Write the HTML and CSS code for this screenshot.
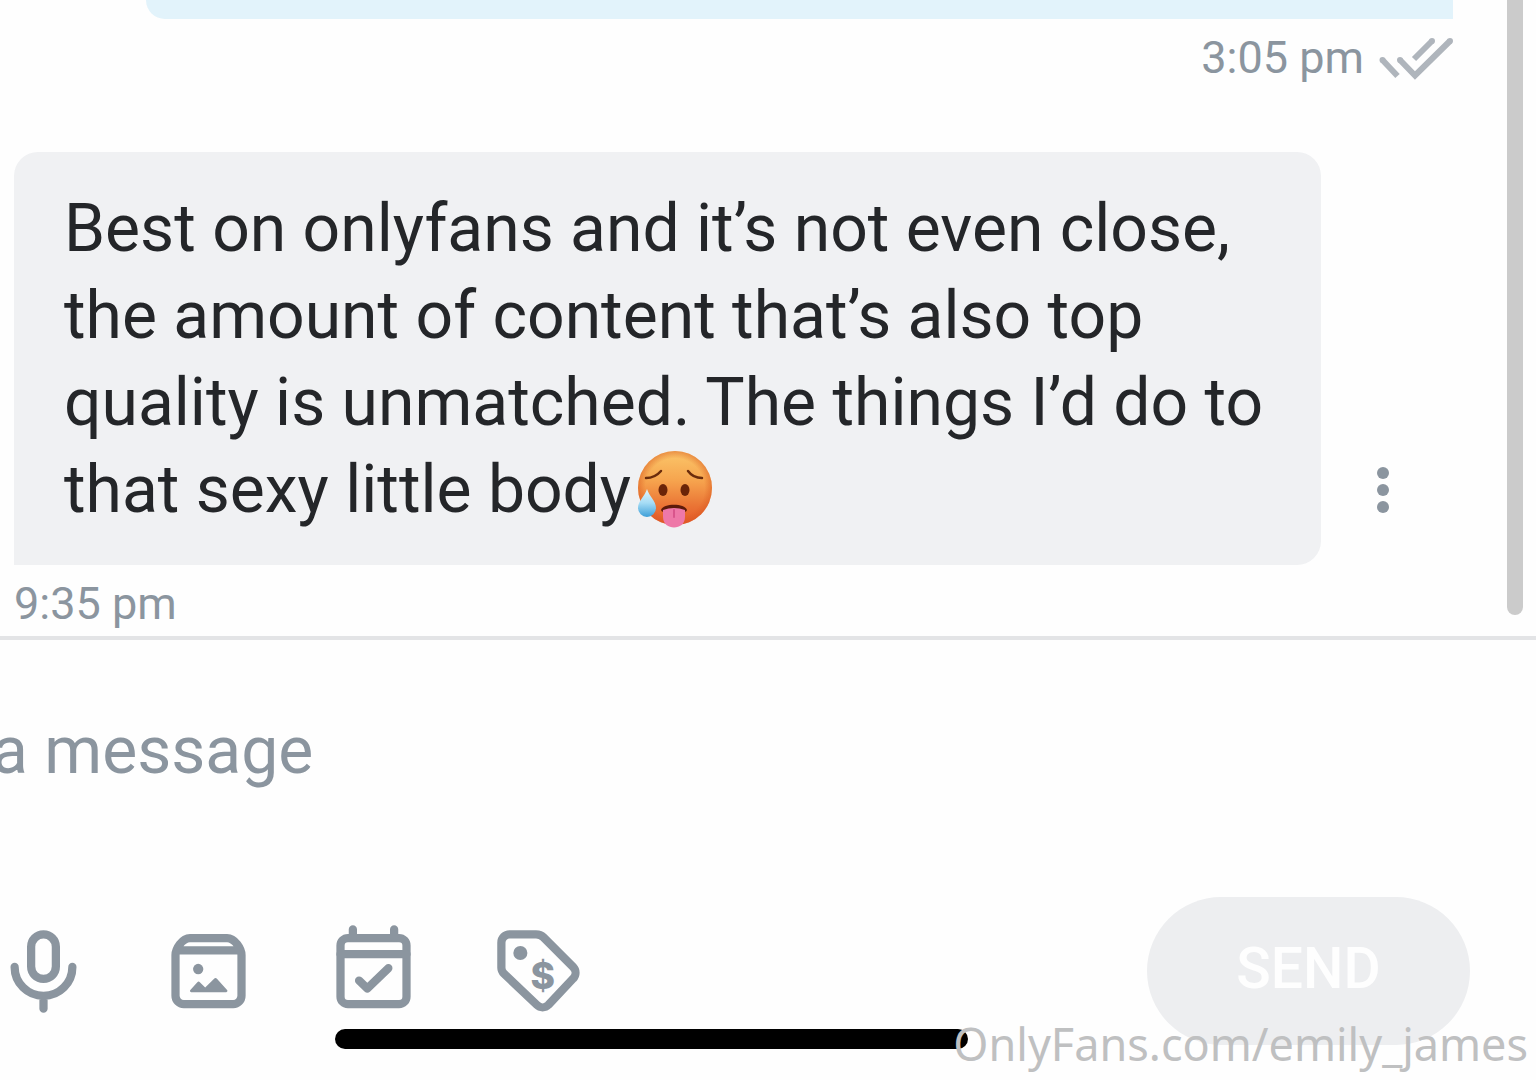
FILE: index.html
```html
<!DOCTYPE html>
<html lang="en">
<head>
    <meta charset="UTF-8">
    <meta name="viewport" content="width=device-width, initial-scale=1.0">
    <title>Messages</title>
    <link rel="stylesheet" href="styles.css">
</head>
<body>
    <main class="thread">
        <div class="message sent">
            <div class="bubble"></div>
            <div class="meta">
                <time>3:05 pm</time>
                <svg class="ticks" viewBox="0 0 75 44" role="img" aria-label="Read">
                    <path d="M4.500 24L19.500 40" />
                    <path d="M36 23L54 5" />
                    <path d="M22 24L37 39.500L72 5" />
                    <path d="M4.500 24h0M22 24h0M54 5h0M72 5h0" stroke-linecap="round" />
                </svg>
            </div>
        </div>

        <div class="message received">
            <div class="row">
                <p class="bubble">Best on onlyfans and it’s not even close, the amount of content that’s also top quality is unmatched. The things I’d do to that sexy little body<svg class="emoji" viewBox="0 0 76 78" role="img" aria-label="Hot face">
                        <defs>
                            <linearGradient id="face" x1="0.5" y1="0" x2="0.5" y2="1">
                                <stop offset="0" stop-color="#fbc76a" />
                                <stop offset="0.4" stop-color="#f6a44e" />
                                <stop offset="0.75" stop-color="#ea7334" />
                                <stop offset="1" stop-color="#e4572a" />
                            </linearGradient>
                            <radialGradient id="edge">
                                <stop offset="0.8" stop-color="#d9581f" stop-opacity="0" />
                                <stop offset="1" stop-color="#d9581f" stop-opacity="0.5" />
                            </radialGradient>
                            <linearGradient id="drop" x1="0" y1="0" x2="0" y2="1">
                                <stop offset="0" stop-color="#e4f6fd" />
                                <stop offset="0.5" stop-color="#a5dcf5" />
                                <stop offset="1" stop-color="#3d9fd8" />
                            </linearGradient>
                        </defs>
                        <circle cx="38" cy="38" r="37" fill="url(#face)" />
                        <circle cx="38" cy="38" r="37" fill="url(#edge)" />
                        <path d="M9 28Q18 28 24 21M51 21Q56 28 65 28" fill="none" stroke="#6b2c0c" stroke-width="2.500" stroke-linecap="round" />
                        <ellipse cx="26" cy="40" rx="4.500" ry="6" fill="#6b2408" />
                        <ellipse cx="48" cy="40" rx="4.500" ry="6" fill="#6b2408" />
                        <path d="M24 60C26 53 48 53 50 60Q49 63 47 61Q37 57 27 61Q25 63 24 60z" fill="#5c1a0a" />
                        <path d="M26 60Q37 56 48 60V67C48 81 26 81 26 67z" fill="#ee78a8" />
                        <path d="M37 60V67" stroke="#d9558c" stroke-width="2" stroke-linecap="round" />
                        <path d="M10 39C12 46 19 51 19 58A9 9 0 0 1 1 58C1 51 8 46 10 39z" fill="url(#drop)" />
                    </svg></p>
                <button class="more" type="button" aria-label="More">
                    <svg viewBox="0 0 12 46">
                        <circle cx="6" cy="6" r="6" />
                        <circle cx="6" cy="23" r="6" />
                        <circle cx="6" cy="40" r="6" />
                    </svg>
                </button>
            </div>
            <div class="meta"><time>9:35 pm</time></div>
        </div>
        <div class="scrollbar"></div>
    </main>

    <form class="composer">
        <input class="field" type="text" placeholder="a message" aria-label="Message">
        <div class="toolbar">
            <button class="tool" type="button" aria-label="Record voice">
                <svg viewBox="0 0 24 24">
                    <rect x="9" y="3" width="6" height="10.800" rx="3" />
                    <path d="M5 10.900a7 7 0 0 0 14 0M12 18v3" />
                </svg>
            </button>
            <button class="tool" type="button" aria-label="Add media">
                <svg viewBox="0 0 24 24">
                    <path d="M4 8V17.900a2 2 0 0 0 2 2h12a2 2 0 0 0 2-2V8C20 6.500 18.400 3.900 16.500 3.900h-9C5.600 3.900 4 6.500 4 8zM4.500 6.900h15" />
                    <circle class="solid" cx="9.500" cy="11.400" r="1.250" />
                    <path class="solid" d="M7.800 17C7.500 17 7.400 16.700 7.600 16.500L9.300 14.600Q9.600 14.300 9.900 14.600L11.200 15.900L13.300 13.800Q13.700 13.400 14.100 13.800L16.500 16.500C16.700 16.700 16.600 17 16.300 17z" />
                </svg>
            </button>
            <button class="tool" type="button" aria-label="Schedule">
                <svg viewBox="0 0 24 24">
                    <rect x="4" y="3.900" width="16" height="16" rx="1.800" />
                    <path d="M4 7.800h16M7 1.800v2M17 1.800v2M8.500 14.200l2 1.900 5.100-4.900" />
                </svg>
            </button>
            <button class="tool" type="button" aria-label="Set price">
                <svg viewBox="0 0 24 24">
                    <path d="M5 3h6.400c.7 0 1.300.2 1.800.7l7.200 7.200a2 2 0 0 1 0 2.800l-6 6.400a2 2 0 0 1-2.800 0L3.600 12.500A2 2 0 0 1 3 11.100V5a2 2 0 0 1 2-2z" />
                    <circle class="solid" cx="7.600" cy="7.500" r="1.700" />
                    <text x="13" y="16.200" text-anchor="middle">$</text>
                </svg>
            </button>
            <button class="send" type="submit" disabled>SEND</button>
        </div>
    </form>

    <div class="home-bar"></div>
    <div class="watermark">OnlyFans.com/emily_james</div>
</body>
</html>
```
FILE: styles.css
```css
* {
    box-sizing: border-box;
}

body {
    margin: 0;
    min-height: 100vh;
    position: relative;
    overflow: hidden;
    background: #fefefe;
    color: #242629;
    font-family: Roboto, "Liberation Sans", sans-serif;
}

button {
    border: none;
    padding: 0;
    background: none;
    font-family: inherit;
    cursor: pointer;
}

svg {
    display: block;
}

.thread {
    position: relative;
    padding: 0 83px 5px 14px;
    border-bottom: 4px solid #e3e4e6;
}

.message {
    display: flex;
    flex-direction: column;
}

.bubble {
    width: calc(100% - 132px);
}

.sent .bubble {
    height: 19px;
    align-self: flex-end;
    background: #e2f3fb;
    border-radius: 0 0 0 24px;
}

.received {
    margin-top: 67px;
}

.row {
    display: flex;
    align-items: flex-end;
    gap: 50px;
}

.received .bubble {
    margin: 0;
    padding: 33px 50px 32px;
    background: #f0f1f3;
    border-radius: 24px 24px 24px 0;
    font-size: 66px;
    line-height: 87px;
}

.emoji {
    display: inline-block;
    width: 76px;
    height: 78px;
    margin: -4px 0 0 6px;
    vertical-align: -16px;
}

.more {
    padding: 0 6px;
    margin-bottom: 52px;
}

.more svg {
    width: 12px;
    height: 46px;
    fill: #8b959f;
}

.meta {
    display: flex;
    align-items: center;
    gap: 14px;
    margin-top: 12px;
    color: #8b959f;
    font-size: 45px;
    line-height: 54px;
}

.sent .meta {
    justify-content: flex-end;
}

.ticks {
    width: 75px;
    height: 44px;
    fill: none;
    stroke: #afb5bc;
    stroke-width: 6;
}

.scrollbar {
    position: absolute;
    top: 0;
    right: 13px;
    bottom: 21px;
    width: 16px;
    background: #cbcbcb;
    border-radius: 0 0 8px 8px;
}

/* Composer */
.composer {
    padding-top: 66px;
}

.field {
    display: block;
    width: 100%;
    height: 88px;
    padding: 0;
    border: none;
    outline: none;
    background: none;
    font-family: inherit;
    font-size: 66px;
    text-indent: -8px;
}

.field::placeholder {
    color: #8b959f;
    opacity: 1;
}

.toolbar {
    display: flex;
    align-items: center;
    gap: 66px;
    margin: 103px 66px 0 -6px;
}

.tool svg {
    width: 99px;
    height: 99px;
    fill: none;
    stroke: #8b959f;
    stroke-width: 2;
    stroke-linecap: round;
    stroke-linejoin: round;
}

.tool .solid,
.tool text {
    fill: #8b959f;
    stroke: none;
}

.tool text {
    font-family: Inter, Roboto, sans-serif;
    font-size: 9px;
    font-weight: 800;
}

.send {
    width: 323px;
    height: 148px;
    margin-left: auto;
    padding-bottom: 6px;
    border-radius: 74px;
    background: #edeef0;
    color: #fefefe;
    font-size: 57px;
    font-weight: 500;
}

.home-bar {
    position: absolute;
    left: 335px;
    bottom: 31px;
    width: 633px;
    height: 20px;
    border-radius: 10px;
    background: #000;
}

.watermark {
    position: absolute;
    right: 8px;
    bottom: 5px;
    color: #bfc0c1;
    font-family: "Noto Sans", "Open Sans", sans-serif;
    font-size: 45px;
    line-height: 62px;
}
```
